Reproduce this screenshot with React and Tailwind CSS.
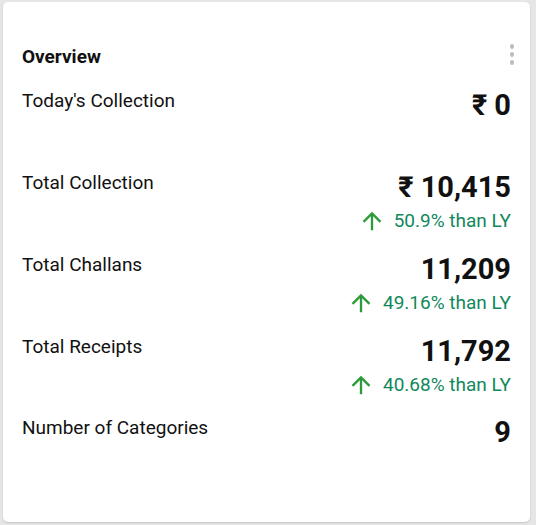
import React from "react";

const ArrowUp = () => (
  <svg width="28" height="28" viewBox="0 0 24 24" fill="#2e9b3a" className="shrink-0">
    <path d="M4 12l1.41 1.41L11 7.83V20h2V7.83l5.58 5.59L20 12l-8-8-8 8z" />
  </svg>
);

const rows = [
  { label: "Today's Collection", value: "₹ 0" },
  { label: "Total Collection", value: "₹ 10,415", sub: "50.9% than LY" },
  { label: "Total Challans", value: "11,209", sub: "49.16% than LY" },
  { label: "Total Receipts", value: "11,792", sub: "40.68% than LY" },
  { label: "Number of Categories", value: "9" },
];

export default function App() {
  return (
    <div
      className="w-[536px] h-[525px] bg-[#e6e6e6] pt-[2px] pl-[3px]"
      style={{ fontFamily: "Roboto, 'Noto Sans', sans-serif" }}
    >
      <div className="w-[527px] h-[520px] bg-white rounded-[5px] shadow-[0_1px_2px_rgba(0,0,0,0.15)] pt-[43px] px-[19px]">
        <div className="flex items-center justify-between h-[24px]">
          <div className="text-[19px] font-bold text-[#111] leading-[24px]">Overview</div>
          <div className="flex flex-col gap-[3.5px] mr-[-3px] mt-[-5px]">
            <span className="block w-[4.5px] h-[4.5px] rounded-full bg-[#bdbdbd]" />
            <span className="block w-[4.5px] h-[4.5px] rounded-full bg-[#bdbdbd]" />
            <span className="block w-[4.5px] h-[4.5px] rounded-full bg-[#bdbdbd]" />
          </div>
        </div>
        <div className="mt-[20px] flex flex-col">
          {rows.map((r, i) => (
            <div key={r.label} className={`${i === 3 ? "h-[81px]" : "h-[82px]"} flex justify-between items-start`}>
              <div className="text-[19px] leading-[24px] text-[#111]">{r.label}</div>
              <div className="flex flex-col items-end">
                <div className="text-[29px] font-bold leading-[32px] text-[#111]">{r.value}</div>
                {r.sub && (
                  <div className="flex items-center mt-[4px] h-[28px]">
                    <ArrowUp />
                    <span className="ml-[8px] text-[19px] leading-[24px] text-[#11885c]">{r.sub}</span>
                  </div>
                )}
              </div>
            </div>
          ))}
        </div>
      </div>
    </div>
  );
}
